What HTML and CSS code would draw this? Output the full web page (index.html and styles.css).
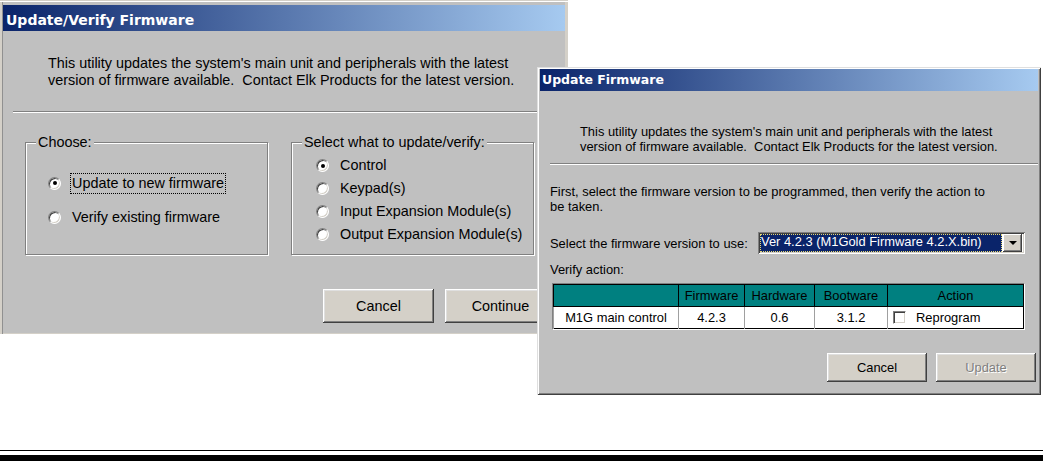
FILE: index.html
```html
<!DOCTYPE html>
<html lang="en">
<head>
  <meta charset="UTF-8" />
  <title>Update Firmware</title>
  <link rel="stylesheet" href="styles.css">
</head>
<body>
  <div class="stage">
    <section class="win win-main">
      <header class="titlebar">Update/Verify Firmware</header>
      <p class="intro">This utility updates the system's main unit and peripherals with the latest<br>version of firmware available.&nbsp; Contact Elk Products for the latest version.</p>
      <hr class="etch">
      <div class="groups">
        <div class="group group-choose">
          <span class="group-label">Choose:</span>
          <div class="opts">
            <div class="opt"><span class="radio on"></span><span class="cap focus">Update to new firmware</span></div>
            <div class="opt"><span class="radio"></span><span class="cap">Verify existing firmware</span></div>
          </div>
        </div>
        <div class="group group-target">
          <span class="group-label">Select what to update/verify:</span>
          <div class="opts">
            <div class="opt"><span class="radio on"></span><span class="cap">Control</span></div>
            <div class="opt"><span class="radio"></span><span class="cap">Keypad(s)</span></div>
            <div class="opt"><span class="radio"></span><span class="cap">Input Expansion Module(s)</span></div>
            <div class="opt"><span class="radio"></span><span class="cap">Output Expansion Module(s)</span></div>
          </div>
        </div>
      </div>
      <div class="actions">
        <button class="btn">Cancel</button>
        <button class="btn">Continue</button>
      </div>
    </section>

    <section class="win win-update">
      <header class="titlebar">Update Firmware</header>
      <p class="intro">This utility updates the system's main unit and peripherals with the latest<br>version of firmware available.&nbsp; Contact Elk Products for the latest version.</p>
      <hr class="etch">
      <p class="lead">First, select the firmware version to be programmed, then verify the action to<br>be taken.</p>
      <div class="pick">
        <span class="pick-label">Select the firmware version to use:</span>
        <div class="combo">
          <span class="combo-value">Ver 4.2.3 (M1Gold Firmware 4.2.X.bin)</span>
          <span class="combo-arrow"><i></i></span>
        </div>
      </div>
      <p class="verify-label">Verify action:</p>
      <div class="grid-wrap">
        <table class="grid">
          <tr>
            <th class="c-name"></th>
            <th class="c-fw">Firmware</th>
            <th class="c-hw">Hardware</th>
            <th class="c-bw">Bootware</th>
            <th>Action</th>
          </tr>
          <tr>
            <td>M1G main control</td>
            <td>4.2.3</td>
            <td>0.6</td>
            <td>3.1.2</td>
            <td class="act"><span class="check"></span>Reprogram</td>
          </tr>
        </table>
      </div>
      <div class="actions">
        <button class="btn">Cancel</button>
        <button class="btn" disabled>Update</button>
      </div>
    </section>
  </div>
  <div class="rule-thin"></div>
  <div class="rule-thick"></div>
</body>
</html>
```

FILE: styles.css
```css
body {
  margin: 0;
  background: #fff;
  color: #000;
  font-family: 'Liberation Sans', Arial, sans-serif;
}
p {
  margin: 0;
  white-space: nowrap;
}
.stage {
  position: relative;
  width: 1045px;
  height: 450px;
}
.rule-thin {
  width: 1043px;
  height: 1px;
  background: #000;
}
.rule-thick {
  width: 1043px;
  height: 6px;
  margin-top: 4px;
  background: #000;
}

/* windows */
.win {
  position: absolute;
  box-sizing: border-box;
  display: flex;
  flex-direction: column;
  background: #c0c0c0;
}
.win-main {
  left: 0;
  top: 0;
  width: 568px;
  height: 334px;
  padding: 5px 3px 0;
  font-size: 14.4px;
  box-shadow: inset 0 1px #d4d0c8, inset 0 2px #fff, inset 2px 0 #d4d0c8, inset 3px 0 #909090, inset -3px 0 #d4d0c8, inset 0 -1px #d4d0c8;
}
.win-update {
  left: 537px;
  top: 67px;
  width: 504px;
  height: 328px;
  padding: 2px 3px 3px;
  font-size: 12.9px;
  box-shadow: inset 1px 1px #dfdfdf, inset -1px -1px #404040, inset 2px 2px #fff, inset -2px -2px #808080;
}
.titlebar {
  background: linear-gradient(to right, #0a246a, #a6caf0);
  color: #fff;
  font-family: 'DejaVu Sans', sans-serif;
  font-weight: bold;
  white-space: nowrap;
}
.win-main .titlebar {
  box-sizing: border-box;
  height: 26px;
  padding: 3px 0 0 3px;
  line-height: 24px;
  font-size: 14px;
}
.win-update .titlebar {
  height: 22px;
  padding-left: 2px;
  line-height: 22px;
  font-size: 12.5px;
}
.etch {
  height: 1px;
  border: 0;
  border-bottom: 1px solid #fff;
  background: #808080;
}

/* left dialog */
.win-main .intro {
  margin: 24px 0 0 45px;
  line-height: 17px;
}
.win-main .etch {
  margin: 22px 0 0 10px;
}
.groups {
  display: flex;
  gap: 23px;
  margin: 29px 0 0 22px;
}
.group {
  box-sizing: border-box;
  width: 243px;
  height: 113px;
  border: 1px solid #808080;
  box-shadow: inset 1px 1px #fff, 1px 1px #fff;
}
.group-label {
  display: block;
  width: fit-content;
  margin: -9px 0 0 10px;
  padding: 0 2px;
  line-height: 16px;
  background: #c0c0c0;
  white-space: nowrap;
}
.opt {
  display: flex;
  align-items: center;
  white-space: nowrap;
}
.group-choose .opts {
  padding-top: 16px;
}
.group-choose .opt {
  height: 34px;
  padding-left: 22px;
}
.group-target .opts {
  padding-top: 4px;
}
.group-target .opt {
  height: 23px;
  padding-left: 24px;
}
.radio {
  box-sizing: border-box;
  width: 13px;
  height: 13px;
  margin-right: 9px;
  flex-shrink: 0;
  border-radius: 50%;
  border: 1px solid;
  border-color: #808080 #fff #fff #808080;
  background: #fff;
  box-shadow: inset 1px 1px #404040, inset -1px -1px #d4d0c8;
  display: grid;
  place-items: center;
}
.radio.on::after {
  content: "";
  width: 4px;
  height: 4px;
  border-radius: 50%;
  background: #000;
}
.cap {
  padding: 1px 1px;
  border: 1px dotted transparent;
  line-height: 17px;
}
.cap.focus {
  border-color: #000;
}

/* buttons */
.actions {
  display: flex;
  justify-content: flex-end;
}
.win-main .actions {
  gap: 11px;
  margin-top: 34px;
  padding-right: 9px;
}
.win-update .actions {
  gap: 9px;
  margin-top: 23px;
  padding-right: 2px;
}
.btn {
  padding: 0;
  border: 0;
  font: inherit;
  color: #000;
  background: #d4d0c8;
  box-shadow: inset -1px -1px #404040, inset 1px 1px #fff, inset -2px -2px #808080, inset 2px 2px #dfdfdf;
}
.win-main .btn {
  width: 111px;
  height: 34px;
}
.win-update .btn {
  width: 100px;
  height: 29px;
}
.btn:disabled {
  color: #808080;
  text-shadow: 1px 1px #fff;
}

/* right dialog */
.win-update .intro {
  margin: 33px 0 0 40px;
  line-height: 15px;
}
.win-update .etch {
  margin: 9px 0 0 10px;
}
.lead {
  margin: 19px 0 0 10px;
  line-height: 15px;
}
.pick {
  display: flex;
  align-items: center;
  height: 22px;
  margin: 18px 0 0 10px;
  white-space: nowrap;
}
.pick-label {
  width: 208px;
}
.combo {
  box-sizing: border-box;
  display: flex;
  width: 267px;
  height: 22px;
  padding: 2px 3px 2px 2px;
  background: #fff;
  box-shadow: inset 1px 1px #808080, inset -1px -1px #fff, inset 2px 2px #404040, inset -2px -2px #d4d0c8;
}
.combo-value {
  flex: 1;
  padding-left: 1px;
  line-height: 16px;
  color: #fff;
  background: #0a246a;
  outline: 1px dotted #e8d870;
  outline-offset: -1px;
}
.combo-arrow {
  width: 19px;
  margin-left: 1px;
  background: #d4d0c8;
  box-shadow: inset -1px -1px #404040, inset 1px 1px #fff, inset -2px -2px #808080;
  display: grid;
  place-items: center;
}
.combo-arrow i {
  width: 0;
  height: 0;
  border-left: 4px solid transparent;
  border-right: 4px solid transparent;
  border-top: 4px solid #000;
}
.verify-label {
  margin: 8px 0 0 10px;
  line-height: 15px;
}
.grid-wrap {
  box-sizing: border-box;
  width: 473px;
  height: 47px;
  margin: 6px 0 0 12px;
  border: 1px solid;
  border-color: #808080 #fff #fff #808080;
}
.grid {
  width: 100%;
  border-collapse: collapse;
  border: 1px solid #000;
}
.grid th,
.grid td {
  height: 21px;
  padding: 0;
  text-align: center;
  font-weight: normal;
  white-space: nowrap;
}
.grid th {
  background: #008080;
  border: 1px solid #000;
}
.grid td {
  background: #fff;
  border-left: 1px solid #a0a0a0;
}
.c-name { width: 124px; }
.c-fw { width: 65px; }
.c-hw { width: 69px; }
.c-bw { width: 72px; }
.grid td.act {
  text-align: left;
  padding-left: 5px;
}
.check {
  box-sizing: border-box;
  display: inline-block;
  width: 13px;
  height: 13px;
  margin-right: 10px;
  vertical-align: -2px;
  border: 1px solid;
  border-color: #808080 #fff #fff #808080;
  background: #fff;
  box-shadow: inset 1px 1px #404040, inset -1px -1px #d4d0c8;
}
```
